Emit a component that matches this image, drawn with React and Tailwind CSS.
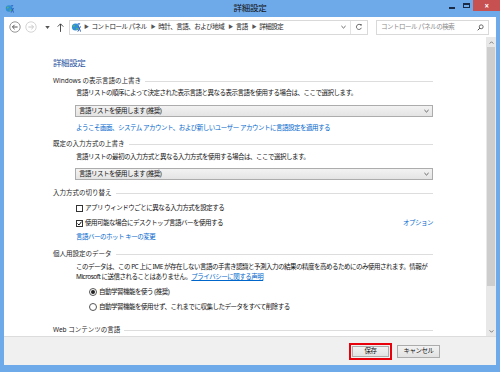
import React from "react";

const font = "font-['Noto_Sans','Noto_Sans_CJK_JP',sans-serif] tracking-[-0.5px]";

const CpIcon = ({ className }) => (
  <svg viewBox="0 0 10 10" className={className}>
    <circle cx="4.5" cy="5" r="3.6" fill="#2f8fd8" />
    <path d="M2.2 3.2 Q3.5 2.4 4.4 3.6 Q3.6 5 2.4 5.2 Z" fill="#5cb85c" />
    <path d="M5 6.2 Q6.4 5.6 7.2 6.6 Q6.4 8 5.2 8 Z" fill="#5cb85c" />
    <path d="M6.4 1.2 L9.4 1.2 L8 3.2 Z" fill="#3a6fc9" />
    <path d="M7.6 4.2 L9.6 9.6 M9.6 4.4 L6.8 9.6" stroke="#2d5fb5" strokeWidth="1" />
  </svg>
);

const Chevron = () => (
  <svg viewBox="0 0 6 4" className="w-[5px] h-[4px]">
    <polyline points="0.5,0.8 3,3.2 5.5,0.8" fill="none" stroke="#444" strokeWidth="1" />
  </svg>
);

const Section = ({ children, className = "" }) => (
  <div className={`flex items-center h-[10px] ${className}`}>
    <span className="whitespace-nowrap text-[#1e1e1e] tracking-normal">{children}</span>
    <div className="flex-1 h-px bg-[#dddddd] ml-[4px]" />
  </div>
);

const Line = ({ children, className = "" }) => (
  <div className={`flex items-center h-[10px] whitespace-nowrap ${className}`}>{children}</div>
);

const Select = ({ className = "" }) => (
  <div
    className={`ml-[22px] h-[12px] flex items-center justify-between px-[3px] border border-[#acacac] bg-gradient-to-b from-[#f2f2f2] to-[#e4e4e4] ${className}`}
  >
    <span className="whitespace-nowrap">言語リストを使用します (推奨)</span>
    <Chevron />
  </div>
);

const Checkbox = ({ checked }) => (
  <div className="w-[7px] h-[7px] border border-[#333] bg-white flex items-center justify-center">
    {checked && (
      <svg viewBox="0 0 6 6" className="w-[5px] h-[5px]">
        <polyline points="0.6,3 2.4,4.8 5.4,0.8" fill="none" stroke="#111" strokeWidth="1.2" />
      </svg>
    )}
  </div>
);

const Radio = ({ checked }) => (
  <div className="w-[8px] h-[8px] rounded-full border border-[#555] bg-white flex items-center justify-center">
    {checked && <div className="w-[4px] h-[4px] rounded-full bg-[#222]" />}
  </div>
);

export default function App() {
  return (
    <div className={`w-[500px] h-[372px] bg-[#6ea9e9] flex flex-col overflow-hidden text-[6.5px] text-[#111] ${font}`}>
      {/* title bar */}
      <div className="h-[17px] flex items-start relative">
        <CpIcon className="w-[9px] h-[9px] mt-[4px] ml-[5px]" />
        <div className="absolute left-0 right-0 top-[3px] text-center text-[8.5px] tracking-[-0.3px] leading-[10px] text-[#111]">
          詳細設定
        </div>
        <div className="ml-auto flex items-start">
          <div className="w-[14px] h-[11px] flex items-center justify-center">
            <div className="w-[6px] h-[2px] bg-[#1b2b45] mt-[4px]" />
          </div>
          <div className="w-[14px] h-[11px] flex items-center justify-center">
            <div className="w-[7px] h-[5px] border border-[#1b2b45] border-t-2" />
          </div>
          <div className="w-[27px] h-[11px] bg-[#c75050] flex items-center justify-center text-white text-[8px] leading-none font-bold">
            ×
          </div>
        </div>
      </div>

      <div className="flex-1 mx-[4px] mb-[7px] flex flex-col bg-white">
        {/* toolbar */}
        <div className="h-[20px] flex items-center">
          <svg viewBox="0 0 12 12" className="w-[12px] h-[12px] ml-[5px]">
            <circle cx="6" cy="6" r="5.2" fill="none" stroke="#8a8a8a" strokeWidth="0.9" />
            <path d="M8.6 6 H3.6 M5.6 3.8 L3.4 6 L5.6 8.2" fill="none" stroke="#555" strokeWidth="1" />
          </svg>
          <svg viewBox="0 0 12 12" className="w-[12px] h-[12px] ml-[4px]">
            <circle cx="6" cy="6" r="5.2" fill="none" stroke="#cfcfcf" strokeWidth="0.9" />
            <path d="M3.4 6 H8.4 M6.4 3.8 L8.6 6 L6.4 8.2" fill="none" stroke="#c8c8c8" strokeWidth="1" />
          </svg>
          <svg viewBox="0 0 6 4" className="w-[5px] h-[3px] ml-[8px]">
            <path d="M0 0 H6 L3 4 Z" fill="#555" />
          </svg>
          <svg viewBox="0 0 8 10" className="w-[7px] h-[9px] ml-[7px]">
            <path d="M4 10 V1 M0.8 4 L4 0.8 L7.2 4" fill="none" stroke="#333" strokeWidth="1" />
          </svg>
          <div className="ml-[5px] w-[299px] h-[15px] border border-[#d9d9d9] flex items-center text-[#1e1e1e]">
            <CpIcon className="w-[10px] h-[10px] ml-[1px]" />
            <span className="ml-[3px] text-[5px] text-[#555]">▶</span>
            <span className="ml-[3px]">コントロール パネル</span>
            <span className="ml-[4px] text-[5px] text-[#555]">▶</span>
            <span className="ml-[3px]">時計、言語、および地域</span>
            <span className="ml-[4px] text-[5px] text-[#555]">▶</span>
            <span className="ml-[3px]">言語</span>
            <span className="ml-[4px] text-[5px] text-[#555]">▶</span>
            <span className="ml-[3px]">詳細設定</span>
            <div className="ml-auto flex items-center h-full">
              <Chevron />
              <div className="w-px h-full bg-[#e3e3e3] ml-[4px]" />
              <svg viewBox="0 0 10 10" className="w-[8px] h-[8px] mx-[4px]">
                <path d="M7.6 3 A3.2 3.2 0 1 0 8 6" fill="none" stroke="#555" strokeWidth="1.1" />
                <path d="M5.8 1.6 L8.4 1.2 L8 3.9 Z" fill="#555" />
              </svg>
            </div>
          </div>
          <div className="ml-[8px] w-[113px] h-[15px] border border-[#d9d9d9] flex items-center justify-between px-[4px]">
            <span className="text-[#8a8a8a]">コントロール パネルの検索</span>
            <svg viewBox="0 0 10 10" className="w-[7px] h-[7px]">
              <circle cx="6" cy="4" r="2.8" fill="none" stroke="#444" strokeWidth="1.1" />
              <path d="M4 6 L1 9" stroke="#444" strokeWidth="1.4" />
            </svg>
          </div>
        </div>

        {/* content */}
        <div className="h-[299px] flex overflow-hidden">
          <div className="flex-1 overflow-hidden">
            <div className="ml-[49px] w-[380px] pt-[20px] flex flex-col">
              <div className="h-[12px] flex items-center text-[8.5px] tracking-[-0.4px] text-[#1e4f9e]">詳細設定</div>

              <Section className="mt-[7px]">Windows の表示言語の上書き</Section>
              <Line className="mt-[2px] ml-[23px]">
                言語リストの順序によって決定された表示言語と異なる表示言語を使用する場合は、ここで選択します。
              </Line>
              <Select className="mt-[7px]" />
              <Line className="mt-[6px] ml-[23px] text-[#0066cc]">
                ようこそ画面、システム アカウント、および新しいユーザー アカウントに言語設定を適用する
              </Line>

              <Section className="mt-[6px]">既定の入力方式の上書き</Section>
              <Line className="mt-[3px] ml-[23px]">
                言語リストの最初の入力方式と異なる入力方式を使用する場合は、ここで選択します。
              </Line>
              <Select className="mt-[6px]" />

              <Section className="mt-[8px]">入力方式の切り替え</Section>
              <Line className="mt-[5px] ml-[23px] gap-[2px]">
                <Checkbox />
                <span>アプリ ウィンドウごとに異なる入力方式を設定する</span>
              </Line>
              <Line className="mt-[5px] ml-[23px] gap-[2px]">
                <Checkbox checked />
                <span>使用可能な場合にデスクトップ言語バーを使用する</span>
                <span className="ml-auto text-[#0066cc]">オプション</span>
              </Line>
              <Line className="mt-[4px] ml-[23px] text-[#0066cc]">言語バーのホット キーの変更</Line>

              <Section className="mt-[7px]">個人用設定のデータ</Section>
              <div className="mt-[3px] ml-[23px] leading-[9.5px] whitespace-nowrap">
                このデータは、この PC 上に IME が存在しない言語の手書き認識と予測入力の結果の精度を高めるためにのみ使用されます。情報が
                <br />
                Microsoft に送信されることはありません。
                <span className="text-[#0066cc] underline">プライバシーに関する声明</span>
              </div>
              <Line className="mt-[6px] ml-[36px] gap-[2px]">
                <Radio checked />
                <span>自動学習機能を使う (推奨)</span>
              </Line>
              <Line className="mt-[5px] ml-[36px] gap-[2px]">
                <Radio />
                <span>自動学習機能を使用せず、これまでに収集したデータをすべて削除する</span>
              </Line>

              <Section className="mt-[13px]">Web コンテンツの言語</Section>
            </div>
          </div>

          {/* scrollbar */}
          <div className="w-[10px] bg-[#e8e8e8] flex flex-col items-center">
            <div className="h-[10px] flex items-center">
              <svg viewBox="0 0 6 4" className="w-[5px] h-[3px]">
                <polyline points="0.5,3.5 3,1 5.5,3.5" fill="none" stroke="#555" strokeWidth="1" />
              </svg>
            </div>
            <div className="w-[8px] h-[239px] bg-[#cdcdcd]" />
            <div className="mt-auto h-[10px] flex items-center">
              <svg viewBox="0 0 6 4" className="w-[5px] h-[3px]">
                <polyline points="0.5,0.5 3,3 5.5,0.5" fill="none" stroke="#555" strokeWidth="1" />
              </svg>
            </div>
          </div>
        </div>

        {/* bottom bar */}
        <div className="flex-1 border-t border-[#dcdcdc] bg-[#f0f0f0] flex items-center justify-end pr-[56px] gap-[5px]">
          <div className="border-2 border-[#e8000b] p-px">
            <div className="w-[37px] h-[11px] border border-[#acacac] bg-gradient-to-b from-[#f2f2f2] to-[#e2e2e2] flex items-center justify-center">
              保存
            </div>
          </div>
          <div className="w-[43px] h-[13px] border border-[#acacac] bg-gradient-to-b from-[#f2f2f2] to-[#e2e2e2] flex items-center justify-center">
            キャンセル
          </div>
        </div>
      </div>
    </div>
  );
}
